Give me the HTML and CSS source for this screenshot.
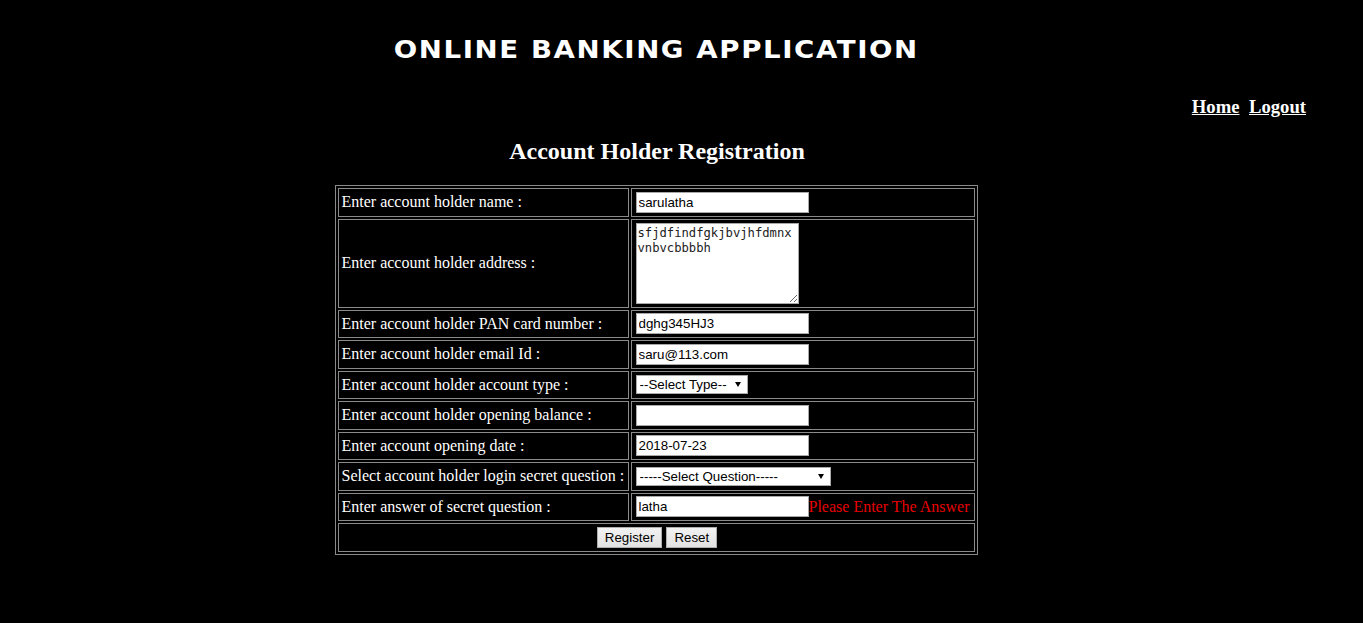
FILE: index.html
```html
<!DOCTYPE html>
<html>
<head>
<meta charset="utf-8">
<title>Online Banking Application</title>
<link rel="stylesheet" href="styles.css">
</head>
<body>
<div class="page">
  <h1 class="app-title"><span class="app-title-text">ONLINE BANKING APPLICATION</span></h1>
  <nav class="nav"><a href="#">Home</a><a href="#">Logout</a></nav>
  <h2 class="form-title">Account Holder Registration</h2>
  <form class="reg-form">
    <table class="reg">
      <tr>
        <td class="lbl">Enter account holder name :</td>
        <td class="fld"><div class="cell"><input class="txt" type="text" value="sarulatha"></div></td>
      </tr>
      <tr>
        <td class="lbl">Enter account holder address :</td>
        <td class="fld"><div class="cell tall"><textarea class="area">sfjdfindfgkjbvjhfdmnx
vnbvcbbbbh</textarea></div></td>
      </tr>
      <tr>
        <td class="lbl">Enter account holder PAN card number :</td>
        <td class="fld"><div class="cell"><input class="txt" type="text" value="dghg345HJ3"></div></td>
      </tr>
      <tr>
        <td class="lbl">Enter account holder email Id :</td>
        <td class="fld"><div class="cell"><input class="txt" type="text" value="saru@113.com"></div></td>
      </tr>
      <tr>
        <td class="lbl">Enter account holder account type :</td>
        <td class="fld"><div class="cell"><span class="sel"><select class="sel-type"><option>--Select Type--</option></select></span></div></td>
      </tr>
      <tr>
        <td class="lbl">Enter account holder opening balance :</td>
        <td class="fld"><div class="cell"><input class="txt" type="text" value=""></div></td>
      </tr>
      <tr>
        <td class="lbl">Enter account opening date :</td>
        <td class="fld"><div class="cell"><input class="txt" type="text" value="2018-07-23"></div></td>
      </tr>
      <tr>
        <td class="lbl">Select account holder login secret question :</td>
        <td class="fld"><div class="cell"><span class="sel"><select class="sel-question"><option>-----Select Question-----</option></select></span></div></td>
      </tr>
      <tr>
        <td class="lbl">Enter answer of secret question :</td>
        <td class="fld"><div class="cell"><input class="txt" type="text" value="latha"><span class="err">Please Enter The Answer</span></div></td>
      </tr>
      <tr>
        <td class="actions" colspan="2"><div class="cell center"><button class="btn" type="button">Register</button><button class="btn" type="reset">Reset</button></div></td>
      </tr>
    </table>
  </form>
</div>
</body>
</html>
```

FILE: styles.css
```css
body {
  margin: 8px;
  background: #000;
  color: #fff;
  font-family: "Liberation Serif", "Times New Roman", serif;
  font-size: 16px;
}

.page {
  width: 1298px;
}

.app-title {
  margin: 28px 0 0;
  font-family: "DejaVu Sans", Verdana, sans-serif;
  font-weight: bold;
  font-size: 24px;
  line-height: 28px;
  text-align: center;
  color: #fff;
}

.app-title-text {
  display: inline-block;
  letter-spacing: 1.4px;
  padding-right: 1px;
  transform: scaleX(1.15);
}

.nav {
  margin-top: 32px;
  display: flex;
  justify-content: flex-end;
  gap: 9.5px;
  font-family: "Liberation Serif", "Times New Roman", serif;
  font-weight: bold;
  font-size: 18.67px;
  line-height: 22px;
}

.nav a {
  color: #fff;
  text-decoration: underline;
}

.form-title {
  margin: 19px 0 0;
  font-family: "Liberation Serif", "Times New Roman", serif;
  font-weight: bold;
  font-size: 24px;
  line-height: 28px;
  text-align: center;
}

.reg-form {
  margin: 0;
  padding-right: 2px;
}

.reg {
  width: 643px;
  margin: 20px auto 0;
  border-collapse: separate;
  border-spacing: 2px;
  border: 1px solid #8a8a8a;
}

.reg td {
  border: 1px solid #8a8a8a;
  padding: 2px 1px 2px 3px;
}

.reg td.lbl {
  width: 285px;
  vertical-align: middle;
  white-space: nowrap;
}

.reg td.fld {
  vertical-align: middle;
}

.cell {
  height: 22.5px;
  display: flex;
  align-items: center;
}

.cell.tall {
  height: 83px;
}

.cell.center {
  justify-content: center;
  gap: 4px;
}

.txt {
  box-sizing: border-box;
  width: 173px;
  height: 21px;
  margin: 0 0 0 1px;
  padding: 1px 2px;
  border: 1px solid #a9a9a9;
  background: #fff;
  color: #000;
  font-family: "Liberation Sans", Arial, sans-serif;
  font-size: 13.33px;
  outline: none;
}

.area {
  box-sizing: border-box;
  width: 163px;
  height: 81px;
  margin: 0 0 0 1px;
  padding: 2px 2px 2px 1px;
  border: 1px solid #a9a9a9;
  background: #fff;
  color: #222;
  font-family: "DejaVu Sans Mono", monospace;
  font-size: 12.2px;
  line-height: 15px;
  resize: both;
  overflow: hidden;
  outline: none;
}

.err {
  color: #e80000;
  font-size: 16px;
  white-space: nowrap;
}

.sel {
  position: relative;
  display: inline-block;
  margin-left: 1px;
}

.sel::after {
  content: "";
  position: absolute;
  right: 7px;
  top: 7px;
  border-left: 3px solid transparent;
  border-right: 3px solid transparent;
  border-top: 5px solid #000;
  pointer-events: none;
}

.sel select {
  appearance: none;
  -webkit-appearance: none;
  box-sizing: border-box;
  display: block;
  height: 19px;
  margin: 0;
  padding: 0 0 0 3px;
  border: 1px solid #a9a9a9;
  border-radius: 0;
  background: #fff;
  color: #000;
  font-family: "Liberation Sans", Arial, sans-serif;
  font-size: 13.33px;
  line-height: 17px;
  outline: none;
}

.sel-type {
  width: 112px;
}

.sel-question {
  width: 195px;
}

.btn {
  box-sizing: border-box;
  height: 21px;
  margin: 0;
  padding: 0 7px;
  border: 1px solid #adadad;
  border-radius: 0;
  background: linear-gradient(#f2f2f2, #e2e2e2);
  color: #000;
  font-family: "Liberation Sans", Arial, sans-serif;
  font-size: 13.33px;
}
```
